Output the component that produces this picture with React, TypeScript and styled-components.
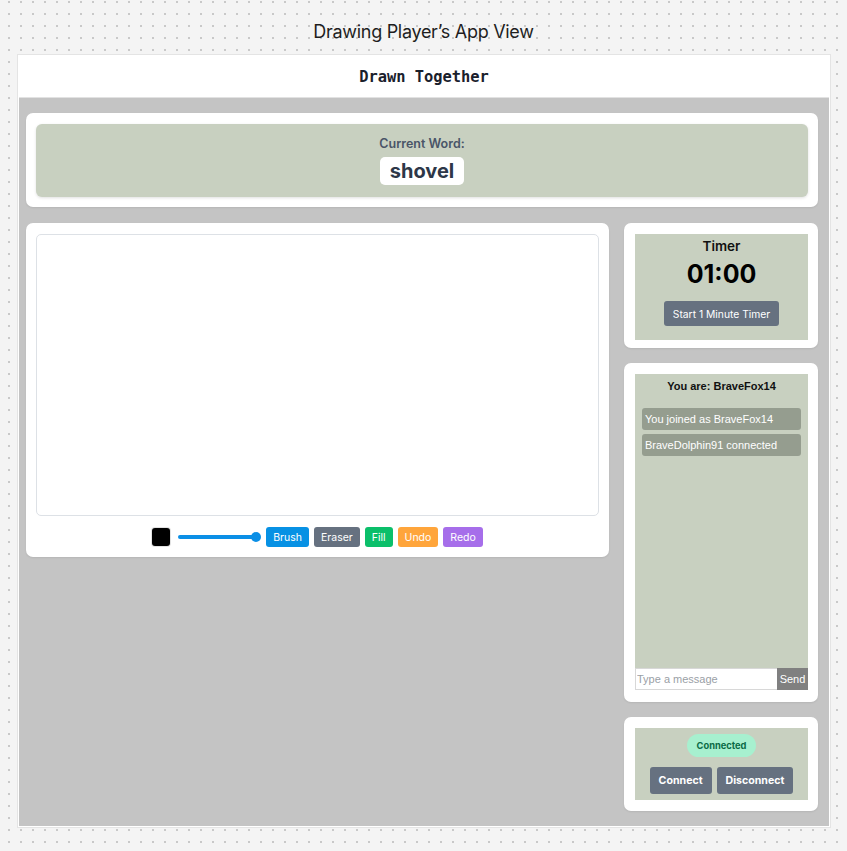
import React from "react";
import styled, { createGlobalStyle } from "styled-components";

const Global = createGlobalStyle`
  html, body { margin: 0; padding: 0; }
  body {
    width: 847px;
    height: 851px;
    overflow: hidden;
    background-color: #f4f4f4;
    background-image: radial-gradient(circle, #c9c9c9 0.9px, transparent 1.2px);
    background-size: 12px 12px;
    background-position: 3px 8px;
    font-family: Inter, "Liberation Sans", sans-serif;
  }
`;

const Page = styled.div`
  display: flex;
  flex-direction: column;
  align-items: center;
`;

const PageTitle = styled.div`
  height: 53px;
  display: flex;
  align-items: center;
  justify-content: center;
  padding-top: 10px;
  box-sizing: border-box;
  font-size: 18px;
  color: #1e1e1e;
  letter-spacing: -0.3px;
`;

const Frame = styled.div`
  width: 814px;
  margin-left: 1px;
  margin-top: 1px;
  background: #fff;
  border: 1px solid #e4e4e4;
  box-sizing: border-box;
  padding: 0 1px 1px 1px;
  display: flex;
  flex-direction: column;
`;

const Header = styled.div`
  height: 43px;
  padding-top: 1px;
  box-sizing: border-box;
  display: flex;
  align-items: center;
  justify-content: center;
  border-bottom: 1px solid #e2e2e2;
  font-family: "DejaVu Sans Mono", monospace;
  font-weight: bold;
  font-size: 15.4px;
  color: #1a202c;
`;

const Stage = styled.div`
  background: #c4c4c4;
  height: 728px;
  padding: 15px 11px 0 7px;
  box-sizing: border-box;
  display: flex;
  flex-direction: column;
  gap: 16px;
`;

const Card = styled.div<{ $pad?: string }>`
  background: #fff;
  border-radius: 7px;
  padding: ${(p) => p.$pad || "11px 10px 10px"};
  box-shadow: 0 1px 2px rgba(0, 0, 0, 0.08);
`;

const WordPanel = styled.div`
  background: #c8d0c0;
  border-radius: 6px;
  height: 73px;
  box-shadow: 0 1px 3px rgba(0, 0, 0, 0.12);
  display: flex;
  flex-direction: column;
  align-items: center;
  padding-top: 12px;
  box-sizing: border-box;
`;

const WordLabel = styled.div`
  font-size: 12.5px;
  font-weight: 600;
  color: #4a5568;
  line-height: 16px;
`;

const WordBox = styled.div`
  margin-top: 5px;
  background: #fff;
  border-radius: 5px;
  padding: 0 10px;
  height: 28px;
  display: flex;
  align-items: center;
  font-size: 20px;
  font-weight: 700;
  color: #2d3748;
`;

const Main = styled.div`
  display: flex;
  gap: 15px;
  align-items: flex-start;
`;

const LeftCol = styled.div`
  width: 583px;
`;

const RightCol = styled.div`
  width: 194px;
  display: flex;
  flex-direction: column;
  gap: 15px;
`;

const Canvas = styled.div`
  height: 282px;
  border: 1px solid #dde1e6;
  border-radius: 5px;
  box-sizing: border-box;
  background: #fff;
`;

const Toolbar = styled.div`
  display: flex;
  align-items: center;
  justify-content: center;
  gap: 5px;
  margin-top: 11px;
  height: 20px;
`;

const Swatch = styled.div`
  width: 18px;
  height: 18px;
  background: #000;
  border-radius: 3px;
  box-shadow: 0 0 0 1px #e2e2e2;
  margin-right: 3px;
`;

const Slider = styled.div`
  position: relative;
  width: 82px;
  height: 4px;
  border-radius: 2px;
  background: #0b8fe6;
  margin-right: 1px;
`;

const Thumb = styled.div`
  position: absolute;
  right: -1px;
  top: -3px;
  width: 10px;
  height: 10px;
  border-radius: 50%;
  background: #0b8fe6;
`;

const ToolButton = styled.button<{ $bg: string }>`
  height: 20px;
  padding: 0 7px;
  border: none;
  border-radius: 3px;
  background: ${(p) => p.$bg};
  color: #fff;
  font-family: Inter, "Liberation Sans", sans-serif;
  font-size: 10.5px;
`;

const GreenPanel = styled.div<{ $h: number }>`
  background: #c8d0c0;
  height: ${(p) => p.$h}px;
  display: flex;
  flex-direction: column;
  align-items: center;
  box-sizing: border-box;
`;

const TimerTitle = styled.div`
  margin-top: 3px;
  font-size: 13.5px;
  font-weight: 600;
  color: #111;
  line-height: 18px;
`;

const TimerValue = styled.div`
  font-size: 25px;
  font-weight: 700;
  color: #000;
  line-height: 30px;
  margin-top: 4px;
`;

const SlateButton = styled.button<{ $bold?: boolean }>`
  border: none;
  border-radius: 3px;
  background: #667180;
  color: #fff;
  font-family: Inter, "Liberation Sans", sans-serif;
  font-size: ${(p) => (p.$bold ? "10.6px" : "10.3px")};
  font-weight: ${(p) => (p.$bold ? 700 : 400)};
  padding: 0 10px;
`;

const TimerButton = styled(SlateButton)`
  height: 25px;
  margin-top: 12px;
  padding: 0 9px;
`;

const ChatPanel = styled(GreenPanel)`
  align-items: stretch;
  font-family: "Liberation Sans", Arial, sans-serif;
`;

const ChatTitle = styled.div`
  text-align: center;
  font-size: 11px;
  font-weight: bold;
  color: #111;
  margin-top: 6px;
  line-height: 13px;
`;

const Messages = styled.div`
  display: flex;
  flex-direction: column;
  gap: 4px;
  padding: 0 7px;
  margin-top: 15px;
  flex: 1;
`;

const Message = styled.div`
  background: #959d8f;
  color: #fff;
  border-radius: 3px;
  font-size: 11px;
  height: 22px;
  display: flex;
  align-items: center;
  padding-left: 3px;
`;

const InputRow = styled.div`
  display: flex;
  height: 22px;
`;

const ChatInput = styled.input`
  flex: 1;
  min-width: 0;
  border: 1px solid #d8d8d8;
  border-right: none;
  box-sizing: border-box;
  padding: 0 1px;
  font-family: "Liberation Sans", Arial, sans-serif;
  font-size: 11px;
  outline: none;
  &::placeholder { color: #9aa0a6; }
`;

const SendButton = styled.button`
  width: 31px;
  border: none;
  background: #808080;
  color: #fff;
  font-family: "Liberation Sans", Arial, sans-serif;
  font-size: 11px;
  padding: 0;
`;

const Badge = styled.div`
  margin-top: 6px;
  height: 23px;
  padding: 0 10px;
  border-radius: 12px;
  background: #a7f0cf;
  color: #0b6b46;
  font-size: 9.3px;
  font-weight: 700;
  display: flex;
  align-items: center;
`;

const ConnRow = styled.div`
  display: flex;
  gap: 5px;
  margin-top: 10px;
`;

const ConnButton = styled(SlateButton)`
  height: 27px;
  padding: 0 9px;
`;

export default function App() {
  return (
    <Page>
      <Global />
      <PageTitle>Drawing Player’s App View</PageTitle>
      <Frame>
        <Header>Drawn Together</Header>
        <Stage>
          <Card>
            <WordPanel>
              <WordLabel>Current Word:</WordLabel>
              <WordBox>shovel</WordBox>
            </WordPanel>
          </Card>
          <Main>
            <LeftCol>
              <Card $pad="11px 10px 10px">
                <Canvas />
                <Toolbar>
                  <Swatch />
                  <Slider>
                    <Thumb />
                  </Slider>
                  <ToolButton $bg="#0791e4">Brush</ToolButton>
                  <ToolButton $bg="#667180">Eraser</ToolButton>
                  <ToolButton $bg="#0bbf6a">Fill</ToolButton>
                  <ToolButton $bg="#ffa53b">Undo</ToolButton>
                  <ToolButton $bg="#a66eea">Redo</ToolButton>
                </Toolbar>
              </Card>
            </LeftCol>
            <RightCol>
              <Card $pad="11px 10px 8px 11px">
                <GreenPanel $h={106}>
                  <TimerTitle>Timer</TimerTitle>
                  <TimerValue>01:00</TimerValue>
                  <TimerButton>Start 1 Minute Timer</TimerButton>
                </GreenPanel>
              </Card>
              <Card $pad="11px 10px 12px 11px">
                <ChatPanel $h={316}>
                  <ChatTitle>You are: BraveFox14</ChatTitle>
                  <Messages>
                    <Message>You joined as BraveFox14</Message>
                    <Message>BraveDolphin91 connected</Message>
                  </Messages>
                  <InputRow>
                    <ChatInput placeholder="Type a message" />
                    <SendButton>Send</SendButton>
                  </InputRow>
                </ChatPanel>
              </Card>
              <Card $pad="11px 10px 11px 11px">
                <GreenPanel $h={72}>
                  <Badge>Connected</Badge>
                  <ConnRow>
                    <ConnButton $bold>Connect</ConnButton>
                    <ConnButton $bold>Disconnect</ConnButton>
                  </ConnRow>
                </GreenPanel>
              </Card>
            </RightCol>
          </Main>
        </Stage>
      </Frame>
    </Page>
  );
}
